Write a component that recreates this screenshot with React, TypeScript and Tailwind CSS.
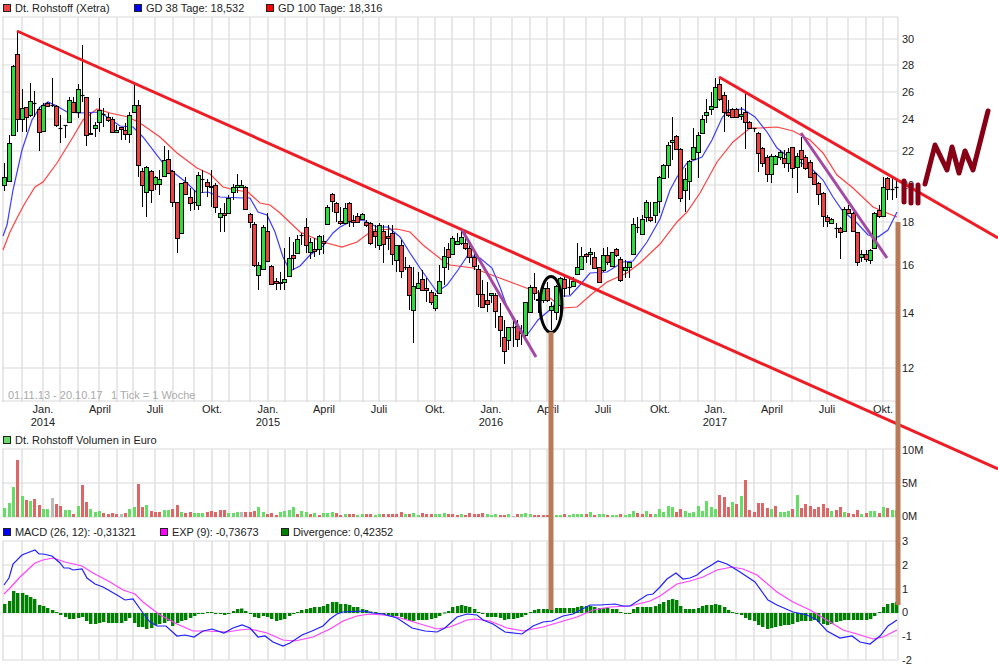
type Candle = ["g" | "r" | "k", number, number, number, number];

// price panel: [colour, body top, body bottom, wick top, wick bottom], all in page pixels
const candles: Candle[] = [
  ["g",177,185,163,191],["g",143,181,135,181],["g",66,135,65,135],["r",54,119,31,132],["g",108,119,89,132],
  ["r",107,117,107,132],["g",101,115,83,117],["k",103,103,91,117],["r",109,132,107,151],["g",105,131,103,131],
  ["r",103,106,102,107],["k",105,105,78,107],["r",106,125,105,127],["k",128,128,115,143],["k",125,125,125,138],
  ["g",100,122,97,122],["r",102,112,97,113],["g",89,112,84,118],["k",95,95,45,102],["r",97,135,97,146],
  ["r",133,134,113,135],["g",125,128,122,137],["g",110,122,98,132],["k",114,114,108,127],["r",117,120,113,122],
  ["r",119,132,117,132],["g",130,132,125,132],["r",127,129,127,140],["r",130,134,123,140],["g",115,134,112,143],
  ["g",105,112,85,113],["r",105,165,100,177],["r",171,185,168,207],["g",167,192,166,217],["r",171,190,170,203],
  ["g",177,184,176,190],["g",179,184,170,195],["g",160,176,146,177],["r",159,173,150,174],["r",171,202,170,207],
  ["r",202,238,202,253],["g",183,233,183,233],["r",182,194,177,195],["r",197,203,188,211],["k",202,202,190,210],
  ["g",175,205,172,210],["k",179,179,170,193],["r",182,186,179,197],["r",186,187,170,207],["r",185,207,183,213],
  ["g",213,217,208,232],["r",213,215,203,232],["g",198,213,195,213],["g",187,192,184,200],["g",185,187,174,193],
  ["g",185,187,180,188],["r",187,209,186,210],["r",214,222,213,228],["r",224,265,222,267],["g",265,275,262,290],
  ["g",227,269,225,269],["r",231,261,213,262],["r",266,284,265,285],["r",281,283,278,290],["r",282,283,272,290],
  ["g",279,282,248,290],["g",258,276,237,277],["r",255,258,242,270],["g",239,253,235,254],["k",235,235,233,245],
  ["r",227,245,218,253],["g",242,252,238,259],["r",249,251,238,257],["g",236,249,235,255],["r",241,243,235,254],
  ["g",207,224,205,225],["r",194,201,193,212],["r",203,212,202,222],["r",221,223,207,225],["g",208,223,203,223],
  ["r",203,221,202,227],["r",220,222,215,227],["r",216,222,213,223],["g",214,219,213,220],["r",222,225,220,227],
  ["r",223,243,222,245],["r",231,236,225,248],["g",225,245,223,250],["r",231,244,225,263],["r",236,238,225,250],
  ["r",233,254,225,265],["g",245,260,245,272],["r",245,271,240,278],["k",267,267,257,270],["r",267,295,265,310],
  ["g",286,310,267,343],["g",283,288,272,288],["r",279,290,270,291],["r",288,290,278,302],["r",292,302,290,305],
  ["g",295,308,293,311],["g",281,293,265,294],["g",256,267,247,285],["r",249,257,243,270],["g",238,254,236,255],
  ["g",241,244,233,245],["g",237,243,230,245],["r",243,248,233,250],["r",248,257,242,263],["r",257,266,253,270],
  ["r",269,294,265,307],["r",294,307,280,308],["r",300,304,282,312],["g",293,295,293,303],["r",295,311,293,328],
  ["r",316,330,303,347],["r",337,351,320,364],["g",327,340,327,350],["k",327,327,318,347],["r",326,339,320,347],
  ["k",333,333,325,345],["g",302,335,302,337],["g",287,312,285,313],["r",287,293,273,300],["r",299,300,290,313],
  ["g",288,300,283,303],["r",288,300,282,302],["g",306,310,302,330],["g",286,312,285,320],["g",278,305,277,317],
  ["r",279,288,277,297],["k",287,287,277,295],["g",281,286,277,287],["g",267,274,243,274],["g",256,269,247,270],
  ["r",254,256,253,263],["g",252,254,248,265],["r",257,268,252,268],["r",267,282,267,283],["g",255,270,248,272],
  ["r",255,262,247,265],["g",252,266,252,267],["r",249,255,248,257],["r",259,280,257,282],["g",267,270,260,278],
  ["g",262,267,262,278],["g",224,254,218,255],["k",227,227,217,233],["g",219,234,215,235],["g",202,217,200,222],
  ["r",217,220,202,222],["g",202,215,202,223],["g",177,201,176,213],["g",165,178,164,179],["g",145,165,142,178],
  ["g",140,142,117,160],["r",136,149,135,150],["r",149,198,148,202],["g",179,190,168,212],["g",161,181,160,200],
  ["g",147,159,128,160],["g",135,152,132,178],["g",119,133,115,134],["g",112,115,99,123],["g",106,109,92,115],
  ["g",87,107,78,108],["r",84,99,77,101],["r",95,112,92,132],["r",112,115,100,117],["r",109,117,108,118],
  ["r",109,117,108,118],["g",114,116,107,120],["r",112,122,94,149],["r",122,128,121,129],["k",128,128,128,132],
  ["r",133,153,132,172],["r",148,163,147,167],["r",157,174,155,182],["g",156,174,154,183],["g",156,164,155,165],
  ["g",152,157,150,160],["r",158,163,150,168],["g",152,163,148,172],["r",147,168,147,178],["g",156,167,153,193],
  ["r",150,159,137,167],["r",157,168,155,170],["r",162,177,160,178],["r",173,184,172,185],["r",183,194,182,205],
  ["r",193,216,192,227],["r",217,221,215,227],["g",219,223,218,224],["k",228,228,223,238],["r",228,232,227,259],
  ["g",209,231,207,232],["r",209,213,205,214],["r",213,231,212,232],["r",232,262,232,266],["g",254,257,250,262],
  ["r",254,259,250,262],["g",250,260,249,264],["g",213,248,212,249],["r",210,216,205,218],["g",187,216,177,217],
  ["r",178,189,177,200],["k",189,189,177,200],["k",187,187,180,198],
];

const volumes =
  "g9 g14 g30 r57 g21 r17 g16 r18 r12 g8 g8 a19 r13 r11 g7 g7 r3 g11 r32 r15 g8 g5 g6 r4 r3 r4 r3 a3 r4 g8 g10 r33 r10 g12 r6 r5 r5 g7 g7 r8 r12 g5 r4 r5 g4 g4 g4 r5 r6 r5 r7 r7 g4 g4 g5 a5 r5 r5 r6 g10 g5 r3 r4 r2 g5 g6 g7 g10 r3 g6 g5 r3 g4 r2 g4 g4 g5 r4 r2 g3 r3 r3 g2 g3 r3 r3 g2 g3 r3 r3 r3 r3 r5 g3 r3 g4 g2 r4 r3 r3 g3 g3 g4 r3 r3 r2 g3 r2 r4 r3 r3 r4 g3 g2 g3 r2 r2 g3 a1 r3 g3 g4 g3 r2 r2 r2 r2 r2 g2 g2 r3 g2 g3 g3 g3 r3 g5 r2 g3 g3 r2 g2 g2 r3 g2 g3 g6 r4 r3 g6 r3 g3 g8 g5 g11 g10 r5 r8 g6 g4 g5 g11 g6 g16 g10 g8 r22 r20 r10 g15 r13 g21 r37 r7 r5 r14 r14 r9 g8 r11 g5 g5 g6 r8 g22 r9 r13 r11 r8 r10 r13 r9 g6 r7 r10 g5 r4 r3 r7 g3 r4 g6 g6 r4 g10 r9 g7 g7"
    .split(" ");

const divergence = [
  9,12,22,20,20,18,16,14,8,7,5,3,1,-2,-4,-6,-6,-5,-4,-8,-11,-11,-10,-9,-10,-10,-10,-10,-8,-5,-10,-14,-14,-16,-15,-12,-11,-10,-8,-13,
  -10,-8,-7,-5,-3,-1,0,1,1,0,-1,-2,0,2,4,4.5,2,0,-4,-5,-3,-4,-6,-8,-7,-6,-3,-1,1,3,4,5,6,6,7,9,
  11,11,9,9,8,6,6,4,3,1.5,1,-1,-1,-2,-3,-3,-4,-6,-8,-8,-7,-7,-7,-6,-5,-3,0.5,2,6,7,8,7,6,4,1,
  -1,-4,-4,-4,-5,-7,-6,-6,-5,-4,-2,1,3,4,4,4,4,5,5,5,5,5,6,7,7,7,6,5,5,5,4,4,1,0,0,4,6,6,6,6,7,
  9,11,13,14,13,7,4,4,4,5,7,8,8,9,8,6,3,1,-1,-2,-5,-7,-8,-12,-14,-16,-15,-14,-13,-12,-12,-11,-9,-8,-8,-8,-7,-9,-11,-12,-11,-9,-8,-7,-7,-7,-7,-7,-7,-6,-3,1,6,9,10,11,
];

const gridX = [3,22,43,60,78,99,117,133,155,173,194,212,229,250,268,285,307,324,340,363,379,396,418,435,452,474,491,512,530,547,564,586,603,625,642,660,680,698,715,736,754,771,792,810,827,848,866,883,898];
const priceY: [number, string][] = [[39,"30"],[65,"28"],[92,"26"],[119,"24"],[151,"22"],[185,"20"],[222,"18"],[265,"16"],[313,"14"],[368,"12"]];
const dates: [number, string, string?][] = [
  [43,"Jan.","2014"],[100,"April"],[155,"Juli"],[212,"Okt."],[268,"Jan.","2015"],[324,"April"],[379,"Juli"],[435,"Okt."],
  [491,"Jan.","2016"],[548,"April"],[603,"Juli"],[660,"Okt."],[715,"Jan.","2017"],[772,"April"],[827,"Juli"],[883,"Okt."],
];

const ma38 = "3,236 7,225 13,190 22,150 32,120 40,107 48,102 57,106 67,112 80,113 100,112 107,117 120,126 133,127 143,137 163,163 173,172 187,183 197,193 208,192 220,197 243,198 250,198 258,212 267,215 275,232 283,257 290,271 300,266 310,255 323,246 333,233 340,227 350,222 363,220 377,227 388,227 400,237 410,253 420,268 437,292 447,285 458,270 468,255 480,258 492,268 500,287 507,307 517,327 527,335 538,320 552,308 560,296 570,296 580,285 590,273 607,272 623,262 633,261 647,242 660,219 670,190 677,177 687,163 702,157 712,140 722,118 728,110 743,109 755,117 767,132 777,148 790,158 810,167 823,180 833,197 842,210 857,223 868,235 878,237 888,230 897,212";
const ma100 = "3,250 10,232 17,218 25,203 35,187 43,182 57,163 73,137 83,120 97,109 110,113 128,117 140,123 160,137 177,153 197,168 210,174 223,187 235,190 248,192 260,203 270,205 280,213 300,232 323,242 342,247 357,242 373,230 397,229 410,232 423,245 442,260 450,265 473,268 497,277 513,283 537,292 550,298 563,308 577,307 593,293 607,282 627,273 640,263 660,244 677,222 687,212 700,193 717,162 733,142 750,128 760,128 777,127 793,131 810,140 823,153 837,175 853,188 873,207 887,213 897,217";
const macd = "4,585 9,578 13,564 22,555 27,553 35,550 39,554 43,554 52,556 60,563 64,568 69,568 73,570 82,569 87,578 95,584 103,587 117,595 125,600 133,599 143,613 150,622 157,626 166,626 177,636 185,635 194,637 203,631 212,629 224,633 233,628 242,625 250,628 258,637 265,636 273,642 283,646 290,643 302,635 312,631 323,626 330,619 337,614 343,612 363,611 373,613 383,614 397,618 412,628 425,631 437,632 445,628 457,617 467,614 477,615 483,620 493,624 505,632 522,634 533,626 543,622 552,621 563,616 573,614 590,605 600,605 615,604 623,606 630,606 647,595 653,594 660,587 667,579 676,573 683,579 690,578 697,575 703,570 710,566 718,561 727,564 740,572 755,582 768,600 777,605 793,612 807,615 817,620 827,631 840,638 852,636 860,642 870,644 880,636 888,626 897,620";
const exp = "4,594 10,588 20,577 35,563 43,560 53,558 65,562 82,566 93,573 110,582 123,590 135,594 143,602 160,615 177,624 193,631 207,631 227,632 240,630 250,629 267,633 283,640 295,641 313,637 330,629 343,621 357,616 370,614 383,615 397,617 417,623 437,629 450,627 467,620 475,619 490,621 507,628 523,631 543,627 577,617 593,610 610,607 630,606 650,601 660,596 677,584 690,581 703,577 717,570 732,567 743,569 757,575 777,592 793,602 810,610 830,622 843,630 857,634 873,639 883,637 897,630";

const legendSwatch: Record<string, string> = {
  red: "bg-[#f04040]",
  blue: "bg-[#0000ff]",
  brightRed: "bg-[#ff0000]",
  green: "bg-[#66dd66]",
  magenta: "bg-[#ff00ff]",
  darkGreen: "bg-[#008000]",
};

function LegendItem({ color, label, className }: { color: string; label: string; className?: string }) {
  return (
    <div className={`flex items-center gap-[4px] ${className ?? ""}`}>
      <span className={`h-[8px] w-[8px] shrink-0 border border-[#222] ${legendSwatch[color]}`} />
      <span className="whitespace-nowrap">{label}</span>
    </div>
  );
}

function Grid({ top, bottom, lines }: { top: number; bottom: number; lines: number[] }) {
  return (
    <g stroke="#d9d9d9" strokeWidth={1.2}>
      {gridX.map((x) => (
        <line key={x} x1={x} x2={x} y1={top} y2={bottom} />
      ))}
      {lines.map((y) => (
        <line key={y} x1={2} x2={898} y1={y} y2={y} />
      ))}
    </g>
  );
}

const candleX = (i: number) => Math.round(4.3 + i * 4.307);

function PriceChart() {
  return (
    <svg width={998} height={416} viewBox="0 16 998 416" className="block overflow-visible">
      <Grid top={17} bottom={402} lines={[17, 401, ...priceY.map(([y]) => y)]} />
      <polyline points={ma100} fill="none" stroke="#ff4040" strokeWidth={1.2} />
      <polyline points={ma38} fill="none" stroke="#3c3cff" strokeWidth={1.2} />
      {candles.map(([c, top, bottom, hi, lo], i) => {
        const x = candleX(i) + 0.5;
        return (
          <g key={i} stroke="#000" strokeWidth={1}>
            <line x1={x} x2={x} y1={hi} y2={lo} />
            {c === "k" ? (
              <line x1={x - 2} x2={x + 2} y1={top + 0.5} y2={top + 0.5} strokeWidth={1.2} />
            ) : (
              <rect x={x - 2} y={top + 0.5} width={4} height={bottom - top} fill={c === "g" ? "#2ade3a" : "#f04040"} />
            )}
          </g>
        );
      })}
      <text x={8} y={399} fontSize={11} fill="#aaa">01.11.13 - 20.10.17</text>
      <text x={111} y={399} fontSize={11} fill="#aaa">1 Tick = 1 Woche</text>
      {priceY.map(([y, label]) => (
        <text key={label} x={902} y={y + 4} fontSize={11} fill="#222">{label}</text>
      ))}
      {dates.map(([x, month, year]) => (
        <g key={x + month} fontSize={11} fill="#222" textAnchor="middle">
          <text x={x} y={413}>{month}</text>
          {year && <text x={x} y={426}>{year}</text>}
        </g>
      ))}
    </svg>
  );
}

function VolumeChart() {
  return (
    <svg width={998} height={76} viewBox="0 448 998 76" className="block overflow-visible">
      <Grid top={449} bottom={517} lines={[449, 483, 517]} />
      {volumes.map((v, i) => {
        const h = Number(v.slice(1));
        const fill = v[0] === "g" ? "#66dd66" : v[0] === "r" ? "#dd6666" : "#bbbbbb";
        return <rect key={i} x={candleX(i) - 1} y={517 - h} width={3} height={h} fill={fill} />;
      })}
      {[[450, "10M"], [483, "5M"], [516, "0M"]].map(([y, label]) => (
        <text key={label} x={902} y={Number(y) + 4} fontSize={11} fill="#222">{label}</text>
      ))}
    </svg>
  );
}

function MacdChart() {
  return (
    <svg width={998} height={130} viewBox="0 540 998 130" className="block overflow-visible">
      <Grid top={541} bottom={660} lines={[541, 565, 589, 613, 636, 660]} />
      {divergence.map((d, i) => (
        <rect key={i} x={candleX(i) - 1} y={d > 0 ? 613 - d : 613} width={3.4} height={Math.max(Math.abs(d), 1)} fill="#008000" />
      ))}
      <polyline points={exp} fill="none" stroke="#ff40ff" strokeWidth={1.2} />
      <polyline points={macd} fill="none" stroke="#2020ff" strokeWidth={1.2} />
      {[[541, "3"], [565, "2"], [589, "1"], [612, "0"], [636, "-1"], [660, "-2"]].map(([y, label]) => (
        <text key={label} x={902} y={Number(y) + 4} fontSize={11} fill="#222">{label}</text>
      ))}
    </svg>
  );
}

export default function App() {
  return (
    <div className="relative h-[670px] w-[998px] overflow-hidden bg-white font-['Liberation_Sans',sans-serif] text-[11px] leading-none text-[#222]">
      <div className="flex h-[16px] items-center pl-[3px]">
        <LegendItem color="red" label="Dt. Rohstoff (Xetra)" className="w-[131px]" />
        <LegendItem color="blue" label="GD 38 Tage: 18,532" className="w-[132px]" />
        <LegendItem color="brightRed" label="GD 100 Tage: 18,316" />
      </div>
      <PriceChart />
      <div className="flex h-[16px] items-center pl-[3px]">
        <LegendItem color="green" label="Dt. Rohstoff Volumen in Euro" />
      </div>
      <VolumeChart />
      <div className="flex h-[16px] items-center pl-[3px] tracking-[-0.08px]">
        <LegendItem color="blue" label="MACD (26, 12): -0,31321" className="w-[157px]" />
        <LegendItem color="magenta" label="EXP (9): -0,73673" className="w-[121px]" />
        <LegendItem color="darkGreen" label="Divergence: 0,42352" />
      </div>
      <MacdChart />

      {/* hand drawn trend lines sit on top of everything */}
      <svg width={998} height={670} className="pointer-events-none absolute inset-0">
        <g stroke="#ee1c25" strokeWidth={3}>
          <line x1={17} y1={31} x2={998} y2={469} />
          <line x1={719} y1={77} x2={998} y2={238} />
        </g>
        <g stroke="#a349a4" strokeWidth={3}>
          <line x1={462} y1={230} x2={536} y2={357} />
          <line x1={801} y1={133} x2={887} y2={258} />
        </g>
        <ellipse cx={551} cy={304.5} rx={11} ry={28} fill="none" stroke="#000" strokeWidth={3} />
        <g stroke="#b97a57" strokeWidth={5}>
          <line x1={551} y1={332} x2={551} y2={610} />
          <line x1={898} y1={222} x2={898} y2={605} />
        </g>
        <g fill="none" stroke="#880015" strokeWidth={5} strokeLinecap="round" strokeLinejoin="round">
          <polyline points="925,184 935,145 947,170 952,147 959,173 965,151 973,170 988,111" />
          <line x1={904} y1={181} x2={904} y2={202} />
          <line x1={911} y1={185} x2={911} y2={203} />
          <line x1={918} y1={185} x2={918} y2={203} />
        </g>
      </svg>
    </div>
  );
}
